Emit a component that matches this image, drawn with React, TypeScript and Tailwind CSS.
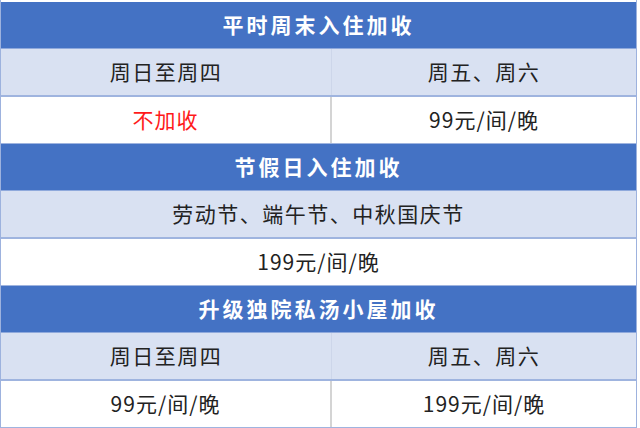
import React from "react";

type Section = {
  title: string;
  head: string[];
  body: { text: string; red?: boolean }[];
};

const sections: Section[] = [
  {
    title: "平时周末入住加收",
    head: ["周日至周四", "周五、周六"],
    body: [{ text: "不加收", red: true }, { text: "99元/间/晚" }],
  },
  {
    title: "节假日入住加收",
    head: ["劳动节、端午节、中秋国庆节"],
    body: [{ text: "199元/间/晚" }],
  },
  {
    title: "升级独院私汤小屋加收",
    head: ["周日至周四", "周五、周六"],
    body: [{ text: "99元/间/晚" }, { text: "199元/间/晚" }],
  },
];

const font = {
  fontFamily: '"Noto Sans CJK SC", "Noto Sans", sans-serif',
};

const App = () => {
  return (
    <div className="w-[640px] h-[428px] bg-white overflow-hidden" style={font}>
      <div className="w-[637px] pt-[2px] border-l border-r border-[#9db2de]">
        {sections.map((s, i) => (
          <div key={i} className="flex flex-col">
            <div className="h-[47px] flex items-center justify-center bg-[#4472c4] border-b border-[#8fa9dc] text-white text-[21px] font-bold tracking-[3px]">
              {s.title}
            </div>
            <div className="h-[48px] flex bg-[#d9e1f2] border-b-2 border-[#9fb4df] text-[21px] text-[#222] tracking-[1.5px]">
              {s.head.map((h, j) => (
                <div
                  key={j}
                  className={
                    s.head.length === 2 && j === 0
                      ? "w-[331px] flex items-center justify-center border-r border-[#cdd6ea]"
                      : "flex-1 flex items-center justify-center"
                  }
                >
                  {h}
                </div>
              ))}
            </div>
            <div className="h-[47px] flex bg-white border-b border-[#9fb4df] text-[21px] text-[#222] tracking-[1px]">
              {s.body.map((b, j) => (
                <div
                  key={j}
                  className={
                    (s.body.length === 2 && j === 0
                      ? "w-[331px] flex items-center justify-center border-r-2 border-[#d4d4d4]"
                      : "flex-1 flex items-center justify-center") +
                    (b.red ? " text-[#ff1a1a]" : "")
                  }
                >
                  {b.text}
                </div>
              ))}
            </div>
          </div>
        ))}
      </div>
    </div>
  );
};

export default App;
